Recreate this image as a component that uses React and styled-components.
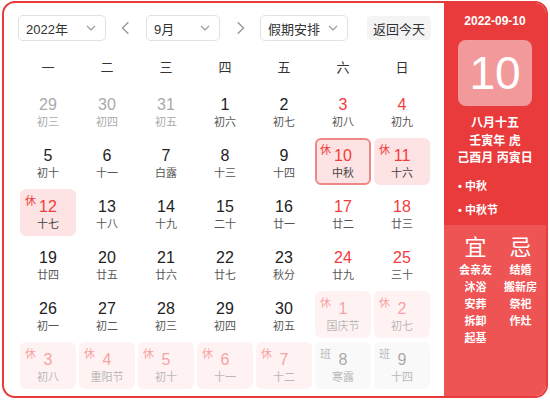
import React from 'react';
import styled, { createGlobalStyle } from 'styled-components';

const Global = createGlobalStyle`
  html, body { margin: 0; padding: 0; background: #fff; }
  body { font-family: "Liberation Sans", "Noto Sans CJK SC", sans-serif; }
`;

const RED = '#e93b3b';

const Frame = styled.div`
  box-sizing: border-box;
  margin: 1px 2px 0 2px;
  width: 546px;
  height: 397px;
  border: 2px solid ${RED};
  border-radius: 13px;
  overflow: hidden;
  display: flex;
`;

const Main = styled.div`
  width: 440px;
  padding: 12px 0 0 14px;
  box-sizing: border-box;
`;

const Toolbar = styled.div`
  display: flex;
  align-items: center;
  height: 26px;
`;

const Select = styled.div`
  box-sizing: border-box;
  width: ${p => p.$w}px;
  height: 26px;
  border: 1px solid #e1e1e1;
  border-radius: 5px;
  display: flex;
  align-items: center;
  justify-content: space-between;
  padding: 0 8px 0 7px;
  font-size: 13px;
  color: #333;
`;

const Arrow = styled.div`
  width: 40px;
  display: flex;
  justify-content: center;
  align-items: center;
  color: #999;
`;

const TodayBtn = styled.div`
  margin-left: 19px;
  height: 24px;
  padding: 0 6px;
  background: #f4f4f4;
  border-radius: 4px;
  display: flex;
  align-items: center;
  font-size: 13px;
  color: #333;
`;

const Week = styled.div`
  display: grid;
  grid-template-columns: repeat(7, 56px);
  column-gap: 3px;
  margin: 14px 0 0 2px;
  height: 22px;
  align-items: center;
`;

const WeekDay = styled.div`
  text-align: center;
  font-size: 13px;
  color: #333;
`;

const Grid = styled.div`
  display: grid;
  grid-template-columns: repeat(7, 56px);
  grid-auto-rows: 47px;
  gap: 4px 3px;
  margin: 10px 0 0 2px;
`;

const cellBg = {
  plain: 'transparent',
  rest: '#fde3e3',
  restNext: '#fff2f2',
  work: '#f9f9f9',
};

const Cell = styled.div`
  position: relative;
  box-sizing: border-box;
  border-radius: 6px;
  background: ${p => cellBg[p.$kind]};
  border: ${p => (p.$selected ? '2px solid #f08787' : 'none')};
  display: flex;
  flex-direction: column;
  align-items: center;
  padding-top: ${p => (p.$selected ? 6 : 8)}px;
`;

const Num = styled.div`
  font-size: 16px;
  line-height: 19px;
  color: ${p => p.$c};
`;

const Lunar = styled.div`
  font-size: 11px;
  line-height: 16px;
  color: ${p => p.$c};
`;

const Badge = styled.span`
  position: absolute;
  left: ${p => (p.$selected ? 3 : 5)}px;
  top: ${p => (p.$selected ? 1 : 3)}px;
  font-size: 11px;
  color: ${p => p.$c};
`;

const Side = styled.div`
  flex: 1;
  display: flex;
  flex-direction: column;
  color: #fff;
`;

const SideTop = styled.div`
  background: ${RED};
  height: 222px;
  display: flex;
  flex-direction: column;
  align-items: center;
  padding-top: 10px;
  box-sizing: border-box;
`;

const DateText = styled.div`
  font-size: 12px;
  font-weight: bold;
  line-height: 16px;
`;

const BigDay = styled.div`
  margin-top: 11px;
  width: 74px;
  height: 66px;
  border-radius: 8px;
  background: #f29a9b;
  display: flex;
  align-items: center;
  justify-content: center;
  font-size: 46px;
  line-height: 1;
`;

const LunarInfo = styled.div`
  margin-top: 9px;
  text-align: center;
  font-size: 12px;
  line-height: 17.5px;
  font-weight: bold;
`;

const Festivals = styled.div`
  align-self: stretch;
  padding: 10px 0 0 14px;
  display: flex;
  flex-direction: column;
  gap: 7px;
  font-size: 11px;
  font-weight: bold;
  line-height: 17px;
`;

const SideBottom = styled.div`
  flex: 1;
  background: #ef5454;
  display: grid;
  grid-template-columns: 46px 44px;
  justify-content: center;
  padding: 10px 0 0 5px;
`;

const YiCol = styled.div`
  display: flex;
  flex-direction: column;
  align-items: center;
`;

const YiHead = styled.div`
  font-size: 22px;
  line-height: 26px;
  margin-bottom: 1px;
`;

const YiItem = styled.div`
  font-size: 11px;
  font-weight: bold;
  line-height: 17px;
  white-space: nowrap;
`;

const Chevron = ({ dir = 'down', size = 12, color = '#999' }) => {
  const pts = {
    down: '2,4 6,8 10,4',
    left: '8,1 3,6 8,11',
    right: '4,1 9,6 4,11',
  }[dir];
  return (
    <svg width={size} height={size} viewBox="0 0 12 12">
      <polyline points={pts} fill="none" stroke={color} strokeWidth="1.2" />
    </svg>
  );
};

const days = [
  [29, '初三', 'prev'], [30, '初四', 'prev'], [31, '初五', 'prev'], [1, '初六'], [2, '初七'], [3, '初八', 'wk'], [4, '初九', 'wk'],
  [5, '初十'], [6, '十一'], [7, '白露'], [8, '十三'], [9, '十四'], [10, '中秋', 'rest', true], [11, '十六', 'rest'],
  [12, '十七', 'rest'], [13, '十八'], [14, '十九'], [15, '二十'], [16, '廿一'], [17, '廿二', 'wk'], [18, '廿三', 'wk'],
  [19, '廿四'], [20, '廿五'], [21, '廿六'], [22, '廿七'], [23, '秋分'], [24, '廿九', 'wk'], [25, '三十', 'wk'],
  [26, '初一'], [27, '初二'], [28, '初三'], [29, '初四'], [30, '初五'], [1, '国庆节', 'restNext'], [2, '初七', 'restNext'],
  [3, '初八', 'restNext'], [4, '重阳节', 'restNext'], [5, '初十', 'restNext'], [6, '十一', 'restNext'], [7, '十二', 'restNext'], [8, '寒露', 'work'], [9, '十四', 'work'],
];

const style = {
  normal: { kind: 'plain', num: '#222', lunar: '#555' },
  prev: { kind: 'plain', num: '#aaa', lunar: '#aaa' },
  wk: { kind: 'plain', num: '#f23c3c', lunar: '#555' },
  rest: { kind: 'rest', num: '#f23c3c', lunar: '#444', badge: '休', badgeC: '#f23c3c' },
  restNext: { kind: 'restNext', num: '#f7a3a3', lunar: '#b8b8b8', badge: '休', badgeC: '#f7a3a3' },
  work: { kind: 'work', num: '#aaa', lunar: '#b8b8b8', badge: '班', badgeC: '#bbb' },
};

export default function App() {
  return (
    <>
      <Global />
      <Frame>
        <Main>
          <Toolbar>
            <Select $w={88}>2022年<Chevron /></Select>
            <Arrow><Chevron dir="left" size={14} /></Arrow>
            <Select $w={74}>9月<Chevron /></Select>
            <Arrow><Chevron dir="right" size={14} /></Arrow>
            <Select $w={88}>假期安排<Chevron /></Select>
            <TodayBtn>返回今天</TodayBtn>
          </Toolbar>
          <Week>
            {['一', '二', '三', '四', '五', '六', '日'].map(d => (
              <WeekDay key={d}>{d}</WeekDay>
            ))}
          </Week>
          <Grid>
            {days.map(([n, l, t = 'normal', sel], i) => {
              const s = style[t];
              return (
                <Cell key={i} $kind={s.kind} $selected={sel}>
                  {s.badge && <Badge $c={s.badgeC} $selected={sel}>{s.badge}</Badge>}
                  <Num $c={s.num}>{n}</Num>
                  <Lunar $c={s.lunar}>{l}</Lunar>
                </Cell>
              );
            })}
          </Grid>
        </Main>
        <Side>
          <SideTop>
            <DateText>2022-09-10</DateText>
            <BigDay>10</BigDay>
            <LunarInfo>
              <div>八月十五</div>
              <div>壬寅年 虎</div>
              <div>己酉月 丙寅日</div>
            </LunarInfo>
            <Festivals>
              <div>• 中秋</div>
              <div>• 中秋节</div>
            </Festivals>
          </SideTop>
          <SideBottom>
            <YiCol>
              <YiHead>宜</YiHead>
              {['会亲友', '沐浴', '安葬', '拆卸', '起基'].map(x => <YiItem key={x}>{x}</YiItem>)}
            </YiCol>
            <YiCol>
              <YiHead>忌</YiHead>
              {['结婚', '搬新房', '祭祀', '作灶'].map(x => <YiItem key={x}>{x}</YiItem>)}
            </YiCol>
          </SideBottom>
        </Side>
      </Frame>
    </>
  );
}
